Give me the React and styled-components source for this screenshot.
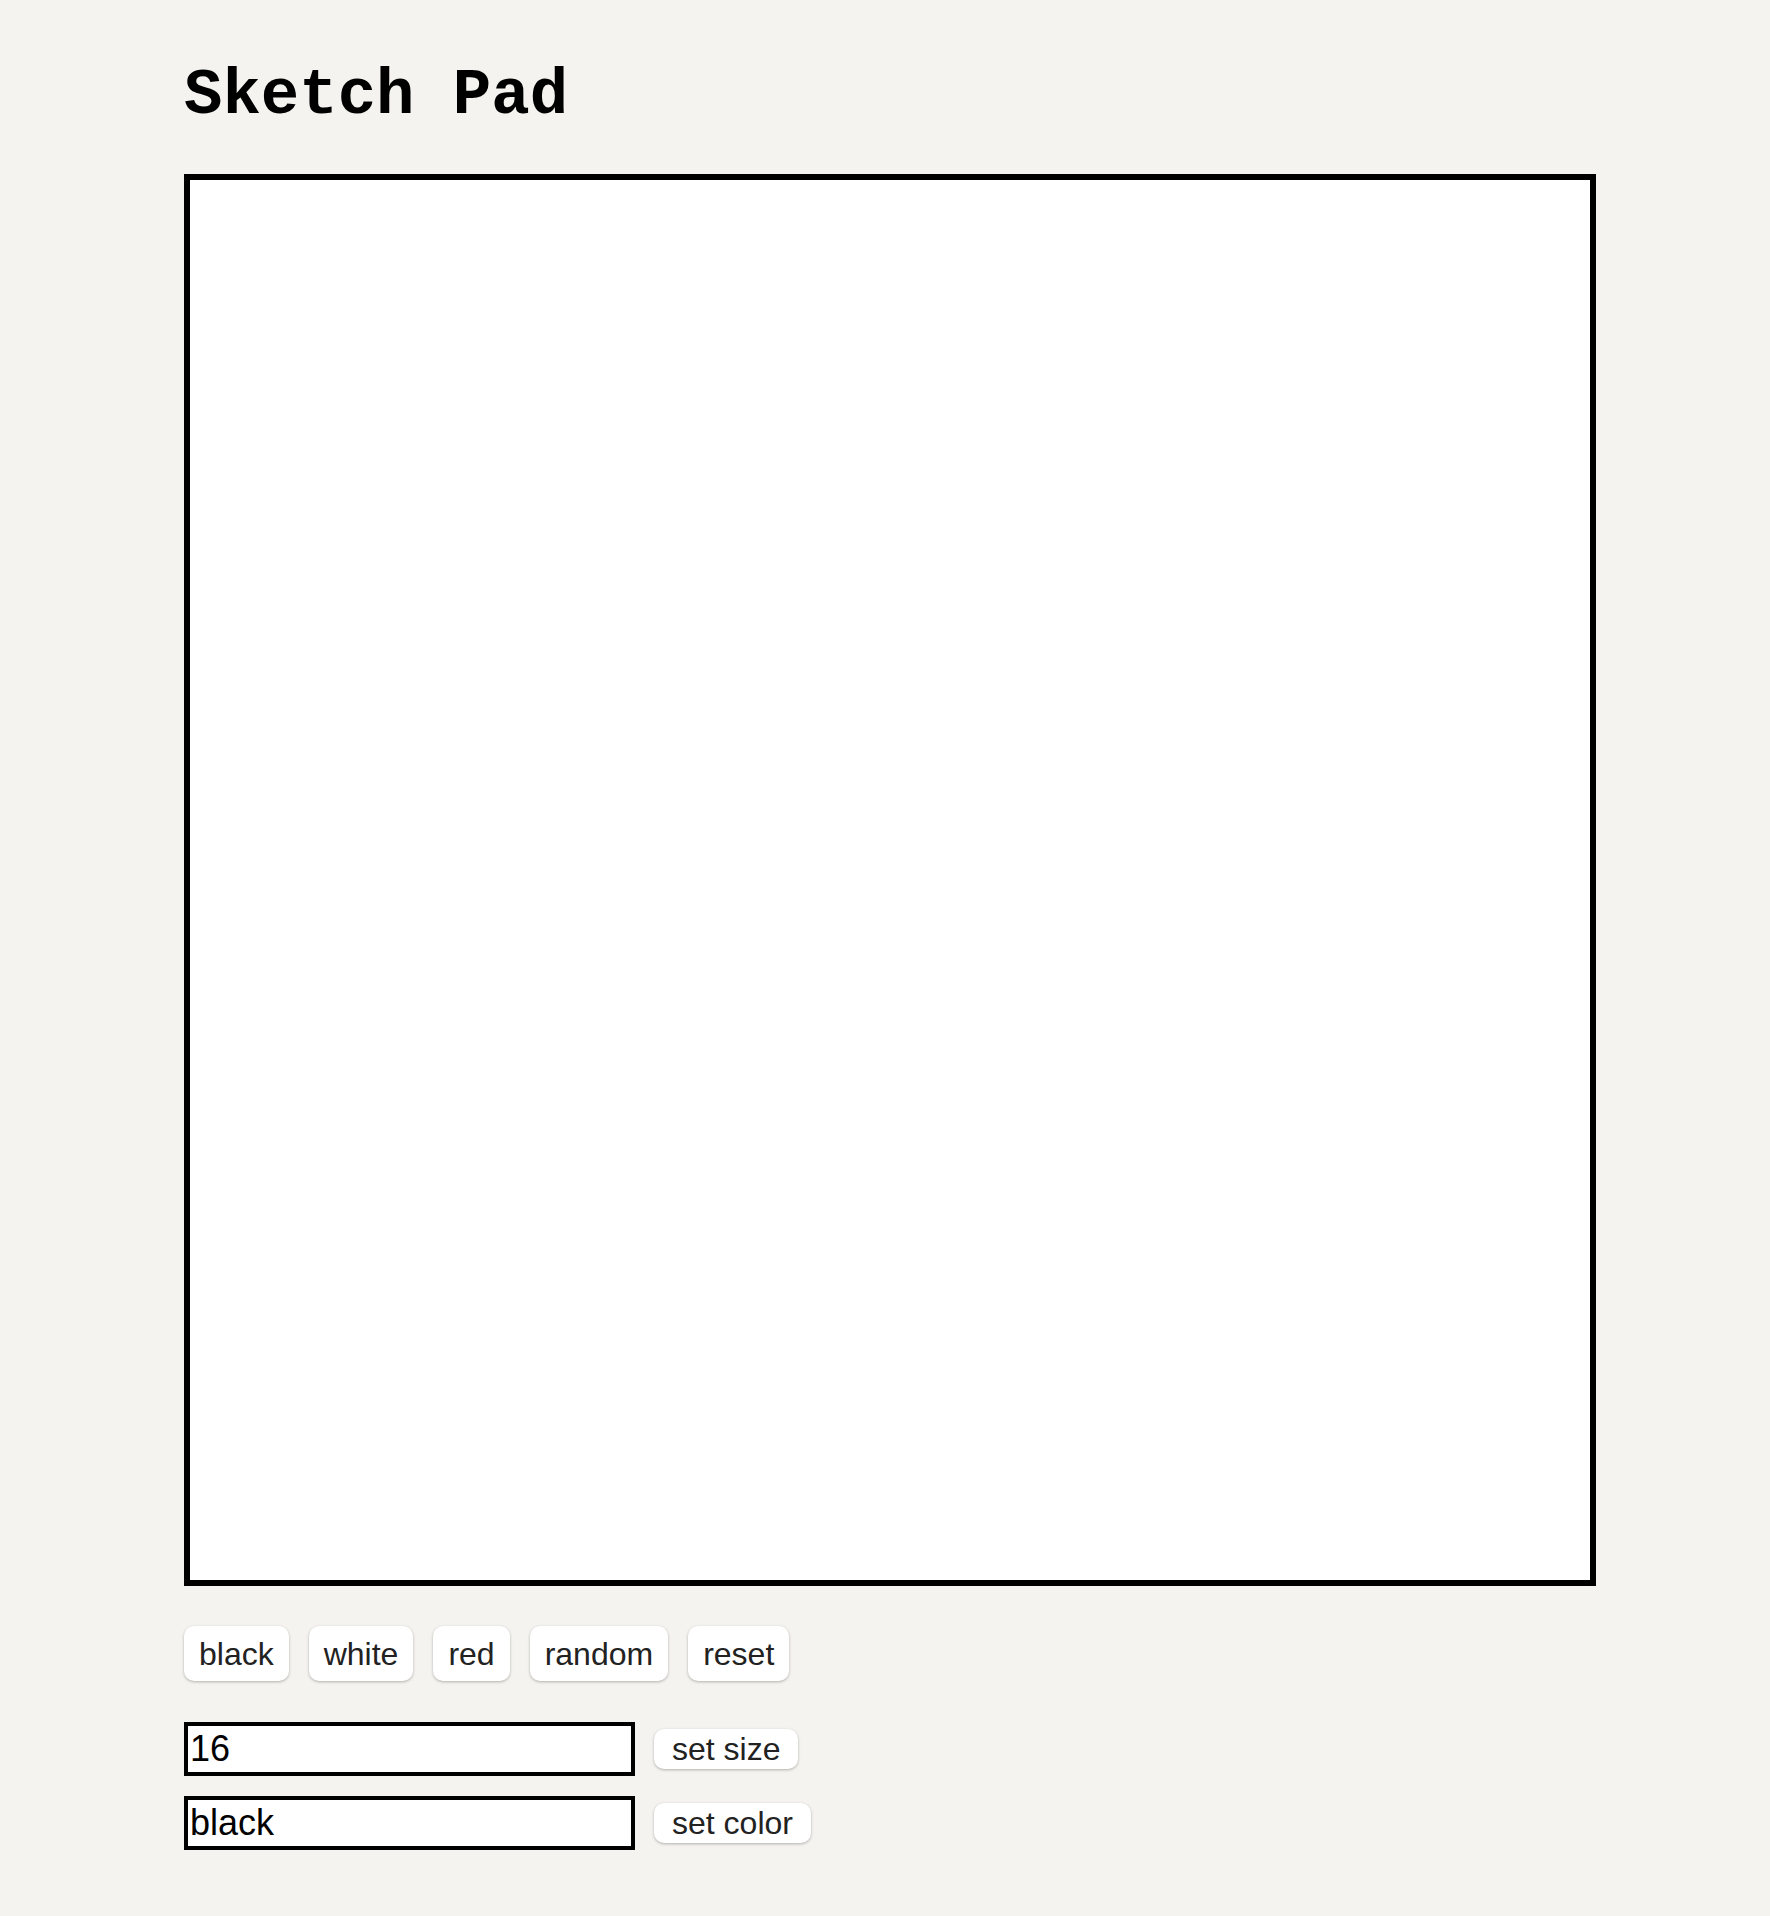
import React from "react";
import styled, { createGlobalStyle } from "styled-components";

const Global = createGlobalStyle`
  html, body { margin: 0; padding: 0; background: #f4f3ef; }
  body { font-family: "Liberation Sans", Arial, sans-serif; }
`;

const Page = styled.main`
  display: flex;
  flex-direction: column;
  align-items: flex-start;
  padding: 64px 0 60px 184px;
`;

const Title = styled.h1`
  margin: 0 0 46px 0;
  font-family: "Liberation Mono", "Courier New", monospace;
  font-weight: bold;
  font-size: 64px;
  line-height: 64px;
  color: #000;
`;

const Board = styled.div`
  box-sizing: border-box;
  width: 1412px;
  height: 1412px;
  border: 6px solid #000;
  background: #fff;
  display: grid;
  grid-template-columns: repeat(${(p) => p.$size}, 1fr);
  grid-template-rows: repeat(${(p) => p.$size}, 1fr);
`;

const Cell = styled.div`
  background: #fff;
`;

const ColorRow = styled.div`
  display: flex;
  gap: 20px;
  margin-top: 40px;
`;

const Button = styled.button`
  font-family: "Liberation Sans", Arial, sans-serif;
  font-size: 32px;
  color: #222;
  background: #fff;
  border: none;
  border-radius: 10px;
  box-shadow: 0 1px 3px rgba(0, 0, 0, 0.28);
  cursor: pointer;
  box-sizing: border-box;
  height: ${(p) => (p.$small ? "40px" : "55px")};
  padding: ${(p) => (p.$small ? "0 18px" : "0 15px")};
  line-height: 1;
`;

const Settings = styled.div`
  display: flex;
  flex-direction: column;
  gap: 20px;
  margin-top: 41px;
`;

const SettingRow = styled.div`
  display: flex;
  align-items: center;
  gap: 19px;
`;

const Field = styled.input`
  box-sizing: border-box;
  width: 451px;
  height: 54px;
  border: 4px solid #000;
  padding: 0 2px;
  font-family: "Liberation Sans", Arial, sans-serif;
  font-size: 36px;
  color: #000;
  background: #fff;
  outline: none;
  border-radius: 0;
`;

export default function App() {
  const size = 16;
  const cells = Array.from({ length: size * size });
  return (
    <>
      <Global />
      <Page>
        <Title>Sketch Pad</Title>
        <Board $size={size}>
          {cells.map((_, i) => (
            <Cell key={i} />
          ))}
        </Board>
        <ColorRow>
          <Button>black</Button>
          <Button>white</Button>
          <Button>red</Button>
          <Button>random</Button>
          <Button>reset</Button>
        </ColorRow>
        <Settings>
          <SettingRow>
            <Field defaultValue="16" />
            <Button $small>set size</Button>
          </SettingRow>
          <SettingRow>
            <Field defaultValue="black" />
            <Button $small>set color</Button>
          </SettingRow>
        </Settings>
      </Page>
    </>
  );
}
